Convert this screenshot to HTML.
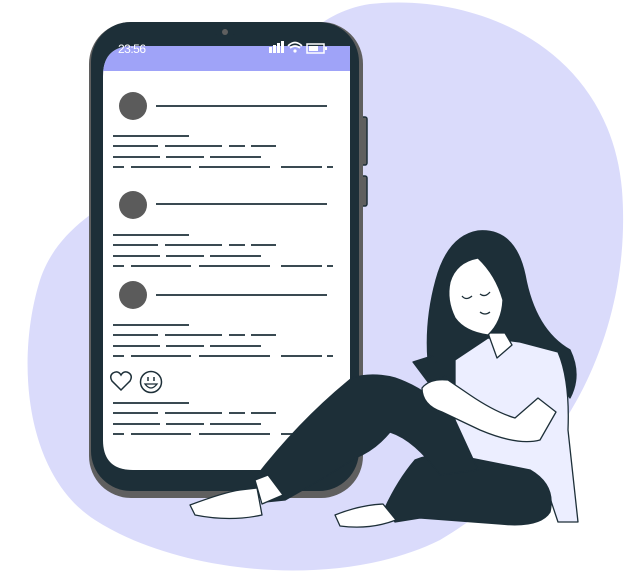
<!DOCTYPE html>
<html><head><meta charset="utf-8"><style>
html,body{margin:0;padding:0;background:#fff;width:630px;height:573px;overflow:hidden}
svg{display:block}
</style></head><body>
<svg width="630" height="573" viewBox="0 0 630 573" xmlns="http://www.w3.org/2000/svg">
<defs>
<g id="txt" stroke="#3a4a52" stroke-width="2">
<line x1="113" y1="0" x2="189" y2="0"/>
<line x1="113" y1="10" x2="158" y2="10"/><line x1="165" y1="10" x2="222" y2="10"/><line x1="229" y1="10" x2="245" y2="10"/><line x1="251" y1="10" x2="276" y2="10"/>
<line x1="113" y1="21" x2="160" y2="21"/><line x1="166" y1="21" x2="204" y2="21"/><line x1="210" y1="21" x2="261" y2="21"/>
<line x1="113" y1="31" x2="124" y2="31"/><line x1="131" y1="31" x2="191" y2="31"/><line x1="199" y1="31" x2="270" y2="31"/><line x1="281" y1="31" x2="322" y2="31"/><line x1="327" y1="31" x2="333" y2="31"/>
</g>
</defs>
<path d="M370 4 C480 -8 610 50 622 190 C632 320 575 460 440 540 C340 590 180 575 95 520 C25 475 15 360 40 280 C65 205 150 190 225 125 C280 75 300 15 370 4 Z" fill="#dadbfb"/>
<!-- phone -->
<rect x="358" y="117" width="9" height="48" rx="2" fill="#5f5f5f" stroke="#1d2f38" stroke-width="1.5"/>
<rect x="358" y="176" width="9" height="30" rx="2" fill="#5f5f5f" stroke="#1d2f38" stroke-width="1.5"/>
<rect x="89" y="22" width="274" height="476" rx="42" fill="#5f5f5f"/>
<rect x="91" y="22" width="268" height="469" rx="40" fill="#1d2f38"/>
<path d="M133 46 H350 V440 Q350 470 320 470 H133 Q103 470 103 440 V76 Q103 46 133 46Z" fill="#fff"/>
<path d="M133 46 H350 V71 H103 V76 Q103 46 133 46Z" fill="#9fa3f8"/>
<path d="M210 42 Q212 33 225 33 Q238 33 240 42 Z" fill="#1d2f38"/>
<rect x="210" y="22" width="30" height="12" fill="#1d2f38"/>
<circle cx="225" cy="32" r="3" fill="#5f5f5f"/>
<text x="118" y="53" font-family="Liberation Sans, sans-serif" font-size="12" fill="#fff" textLength="28">23:56</text>
<g fill="#fff"><rect x="269" y="47" width="3" height="6"/><rect x="273" y="45" width="3" height="8"/><rect x="277" y="43" width="3" height="10"/><rect x="281" y="41" width="3" height="12"/></g>
<path d="M288 46 Q295 39 302 46 M290 48 Q295 44 300 48" stroke="#fff" stroke-width="1.6" fill="none"/><circle cx="295" cy="51" r="1.6" fill="#fff"/>
<rect x="307" y="44" width="17" height="9" fill="none" stroke="#fff" stroke-width="1.5"/><rect x="309" y="46" width="9" height="5" fill="#fff"/><rect x="325" y="47" width="2" height="3" fill="#fff"/>
<g fill="#5b5b5b"><circle cx="133" cy="106" r="14"/><circle cx="133" cy="205" r="14"/><circle cx="133" cy="295" r="14"/></g>
<g stroke="#3a4a52" stroke-width="2"><line x1="156" y1="106" x2="327" y2="106"/><line x1="156" y1="204" x2="327" y2="204"/><line x1="156" y1="295" x2="327" y2="295"/></g>
<use href="#txt" y="136"/><use href="#txt" y="235"/><use href="#txt" y="325"/><use href="#txt" y="403"/>
<path d="M121 390 L112 381 Q109 376 113 373 Q118 370 121 375 Q124 370 129 373 Q133 376 130 381 Z" fill="none" stroke="#1d2f38" stroke-width="1.5"/>
<circle cx="151" cy="382" r="10.5" fill="none" stroke="#1d2f38" stroke-width="1.5"/>
<path d="M145 384 Q151 392 157 384 Z" fill="none" stroke="#1d2f38" stroke-width="1.3"/>
<line x1="148" y1="377" x2="148" y2="381" stroke="#1d2f38" stroke-width="1.5"/><line x1="154" y1="377" x2="154" y2="381" stroke="#1d2f38" stroke-width="1.5"/>
<!-- woman -->
<g stroke="#1d2f38" stroke-width="1.3" stroke-linejoin="round">
<!-- hair -->
<path d="M478 231 Q515 228 525 275 Q535 330 570 350 Q582 375 570 398 L550 372 Q520 340 480 345 L450 418 Q430 400 428 360 Q425 320 436 280 Q448 236 478 231Z" fill="#1d2f38"/>
<!-- shirt -->
<path d="M455 360 L488 338 L520 342 L558 352 Q570 380 568 430 L578 522 L558 522 L548 492 L470 478 L455 430 Z" fill="#eceeff"/>
<path d="M488 333 L497 358 L512 345 L505 333 Z" fill="#fff"/>
<!-- face -->
<path d="M450 282 Q456 262 478 258 Q496 275 503 300 Q502 322 488 335 Q465 332 455 318 Q446 300 450 282 Z" fill="#fff"/>
<!-- right leg -->
<path d="M385 508 Q398 480 415 460 Q440 450 470 458 L530 470 Q556 485 550 512 Q540 528 500 524 L420 518 L395 522 Z" fill="#1d2f38"/>
<!-- left leg -->
<path d="M255 478 Q300 420 352 378 Q372 372 395 378 Q430 390 455 420 L478 470 L440 475 Q415 440 390 432 Q375 450 355 458 Q330 475 285 500 L265 502 Z" fill="#1d2f38"/>
<!-- left shoe -->
<path d="M190 505 Q225 492 240 490 L257 488 L262 515 Q230 522 195 515 Z" fill="#fff"/>
<path d="M255 480 L268 475 L283 495 L262 504 Z" fill="#fff"/>
<!-- right shoe -->
<path d="M335 515 Q360 505 383 504 L396 520 Q370 530 340 526 Z" fill="#fff"/>
<!-- hands/arm -->
<path d="M422 388 Q430 378 448 380 L470 395 Q495 412 515 418 L538 398 L556 412 L540 440 Q518 446 480 430 L442 412 Q422 405 422 388 Z" fill="#fff"/>
<path d="M413 362 L432 356 L446 376 L428 382 Z" fill="#1d2f38"/>
</g>
<path d="M462 296 Q466 301 472 296 M480 294 Q485 298 490 292 M480 312 Q485 316 490 312" stroke="#1d2f38" stroke-width="1.3" fill="none"/>
</svg>
</body></html>
